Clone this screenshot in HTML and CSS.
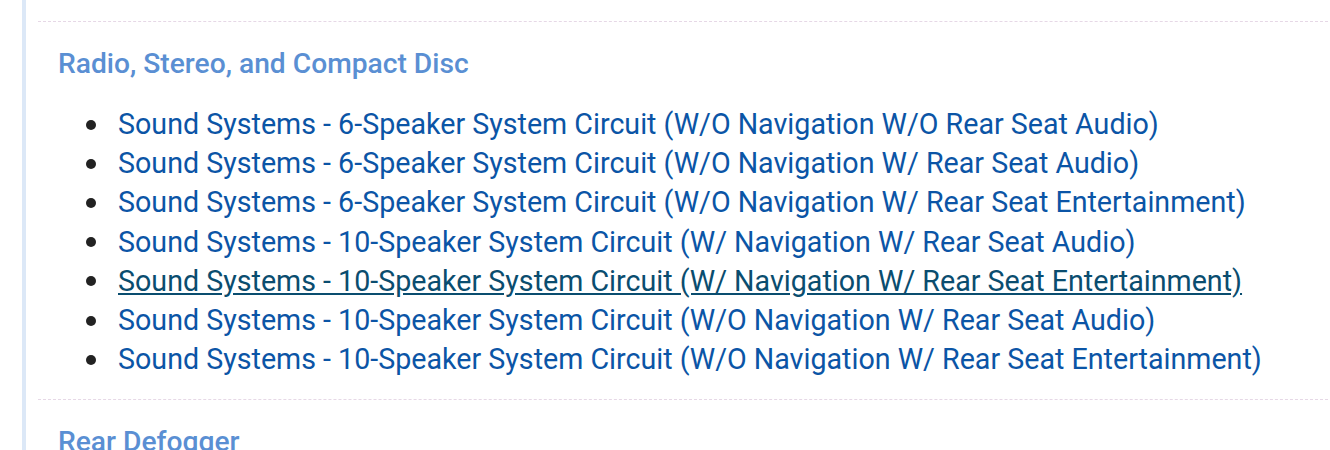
FILE: index.html
```html
<!DOCTYPE html>
<html>
<head>
<meta charset="utf-8">
<link rel="stylesheet" href="styles.css">
</head>
<body>
<div class="page">
  <div class="content">
    <hr class="divider">
    <section class="group">
      <h2 class="group-title">Radio, Stereo, and Compact Disc</h2>
      <ul class="links">
        <li><a href="#">Sound Systems - 6-Speaker System Circuit (W/O Navigation W/O Rear Seat Audio)</a></li>
        <li><a href="#">Sound Systems - 6-Speaker System Circuit (W/O Navigation W/ Rear Seat Audio)</a></li>
        <li><a href="#">Sound Systems - 6-Speaker System Circuit (W/O Navigation W/ Rear Seat Entertainment)</a></li>
        <li><a href="#">Sound Systems - 10-Speaker System Circuit (W/ Navigation W/ Rear Seat Audio)</a></li>
        <li><a href="#" class="hover">Sound Systems - 10-Speaker System Circuit (W/ Navigation W/ Rear Seat Entertainment)</a></li>
        <li><a href="#">Sound Systems - 10-Speaker System Circuit (W/O Navigation W/ Rear Seat Audio)</a></li>
        <li><a href="#">Sound Systems - 10-Speaker System Circuit (W/O Navigation W/ Rear Seat Entertainment)</a></li>
      </ul>
    </section>
    <hr class="divider">
    <section class="group">
      <h2 class="group-title">Rear Defogger</h2>
    </section>
  </div>
</div>
</body>
</html>
```
FILE: styles.css
```css
html, body {
  margin: 0;
  padding: 0;
  background: #ffffff;
}
body {
  font-family: Roboto, "Liberation Sans", sans-serif;
  overflow: hidden;
}
.page {
  padding-left: 22px;
  height: 450px;
}
.content {
  border-left: 4px solid #dce8f7;
  padding-left: 12px;
  padding-right: 2px;
  height: 100%;
  box-sizing: border-box;
  padding-top: 21px;
}
.divider {
  border: 0;
  border-top: 1px dashed #e6d8e6;
  margin: 0;
  height: 0;
}
.group {
  padding-left: 20px;
}
.group-title {
  margin: 0;
  padding-top: 24px;
  font-size: 28.2px;
  font-weight: 500;
  line-height: 36px;
  color: #5a8fd3;
}
.links {
  margin: 23px 0 20px 0;
  padding-left: 28px;
  list-style: none;
  font-size: 28.65px;
  line-height: 39.2px;
}
.links li {
  display: flex;
  align-items: center;
}
.links li::before {
  content: "";
  flex: none;
  width: 10px;
  height: 10px;
  border-radius: 50%;
  background: #222;
  margin-right: 22px;
}
.links a {
  color: #0b55a6;
  text-decoration: none;
}
.links a.hover {
  color: #0a4d6f;
  text-decoration: underline;
}
```
